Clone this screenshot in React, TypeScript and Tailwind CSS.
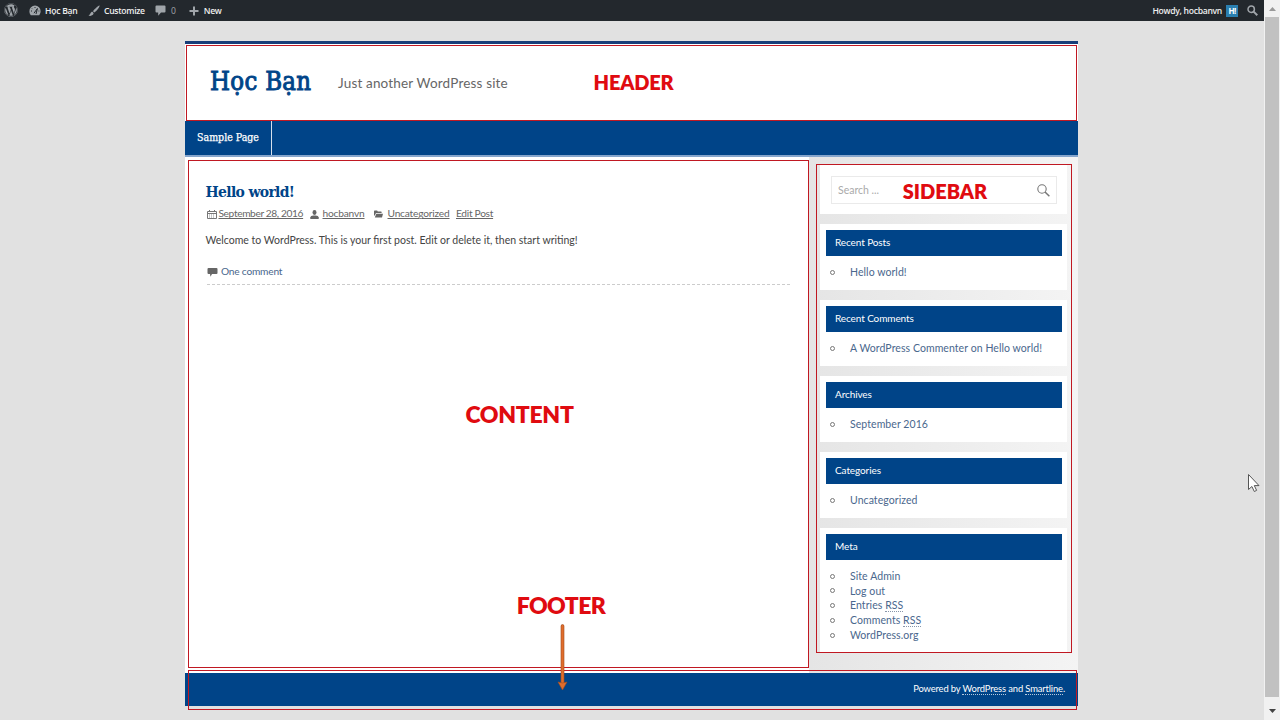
import React from "react";
import { FaWordpress } from "react-icons/fa";

const Widget = ({ title, items }: { title: string; items: React.ReactNode[] }) => (
  <section className="mb-[9.9px] bg-white pt-1.5 pr-[5px] pb-[10px] pl-1.5">
    <h3 className="flex h-[26px] items-center bg-[#004488] pb-[2px] pl-[9px] text-[10px] leading-none tracking-[-0.1px] text-white">
      {title}
    </h3>
    <ul className="pt-[9.3px] text-[10.5px] leading-[14.7px] tracking-[0.07px] text-[#4a678d]">
      {items.map((item, i) => (
        <li key={i} className="flex items-center pl-1">
          <span className="mr-[15px] block size-[5px] rounded-full border border-[#777]" />
          <span className="whitespace-nowrap">{item}</span>
        </li>
      ))}
    </ul>
  </section>
);

const Rss = () => <span className="border-b border-dotted border-[#8896aa] leading-none">RSS</span>;

const AdminBar = () => (
  <div className="flex h-[21px] items-center bg-[#23282d] font-['Open_Sans'] text-[8.6px] font-semibold leading-none tracking-[-0.25px] text-[#eee]">
    <FaWordpress className="mb-px ml-1 size-[14px] text-[#a0a5aa]" />
    <svg className="ml-[11px] h-[11px] w-[12px]" viewBox="0 0 12 11">
      <path d="M6 .5A5.6 5.6 0 0 0 .4 6.2c0 1.5.5 2.8 1.4 4.1h8.4c.9-1.3 1.4-2.6 1.4-4.1A5.6 5.6 0 0 0 6 .5Z" fill="#a0a5aa" />
      <path d="M5 8.2 8.4 3.5 7 9" stroke="#23282d" fill="none" />
      <path d="M2 6h1M3 3.5l.6.6M6 2v1M9.5 6h.8" stroke="#23282d" />
    </svg>
    <span className="mt-px ml-1 w-[33px] whitespace-nowrap">Học Bạn</span>
    <svg className="ml-[10px] size-[12px]" viewBox="0 0 12 12" fill="#a0a5aa">
      <path d="M11.6.4c-1-.3-4.7 3.2-6.6 5.8l1.4 1.4C9 5.3 12.1 1.4 11.6.4ZM4.4 6.8C2.6 6.7 2.7 9.2.5 10.6c2.5.9 5-.3 5.1-2.5Z" />
    </svg>
    <span className="mt-px ml-1 w-[41px] tracking-[-0.3px] whitespace-nowrap">Customize</span>
    <svg className="ml-[10px] size-[11px]" viewBox="0 0 11 11" fill="#a0a5aa">
      <path d="M1.5.5h8q1 0 1 1v5q0 1-1 1H6L3.2 10.8V7.5H1.5q-1 0-1-1v-5q0-1 1-1Z" />
    </svg>
    <span className="mt-px ml-[5px] font-normal text-[#a0a5aa]">0</span>
    <svg className="ml-[13px] size-[10px]" viewBox="0 0 10 10">
      <path d="M5 .5v9M.5 5h9" stroke="#a0a5aa" strokeWidth="2" />
    </svg>
    <span className="mt-px ml-[5px]">New</span>
    <span className="mt-px ml-auto tracking-[-0.3px]">Howdy, hocbanvn</span>
    <span className="ml-1 flex size-[12px] items-center justify-center bg-[#2a7fb0] text-[8px] font-bold tracking-[-0.8px] text-white">
      H!
    </span>
    <svg className="mr-[6px] ml-[9px] size-[11px]" viewBox="0 0 11 11" fill="none" stroke="#a0a5aa">
      <circle cx="4.2" cy="4.2" r="3.2" strokeWidth="1.5" />
      <path d="m6.6 6.6 3.7 3.6" strokeWidth="2" />
    </svg>
  </div>
);

const Entry = () => (
  <main className="w-[624px] bg-white pt-[24px] pl-[20.5px]">
    <h2 className="font-['DejaVu_Serif_Condensed','DejaVu_Serif'] text-[15.5px] leading-[21px] font-bold tracking-[-0.65px] whitespace-nowrap text-[#004488] [font-stretch:condensed]">
      Hello world!
    </h2>
    <div className="mt-[5px] flex h-[14px] items-center text-[10.2px] whitespace-nowrap text-[#666]">
      <svg className="ml-[1px] h-[9px] w-[10px]" viewBox="0 0 10 9" fill="none" stroke="#777">
        <path d="M.5 1.5h9v7h-9ZM.5 3.5h9M2.5 0v2M7.5 0v2" />
        <path d="M2 5h6M2 7h6" strokeDasharray="1 1" strokeWidth=".8" />
      </svg>
      <span className="ml-[2px] w-[84px] tracking-[-0.38px] underline">September 28, 2016</span>
      <svg className="ml-[7px] h-[9px] w-[9px]" viewBox="0 0 9 9" fill="#666">
        <ellipse cx="4.5" cy="2.5" rx="2" ry="2.4" />
        <path d="M.3 9V7.3q.3-1.7 3-1.9h2.4q2.7.2 3 1.9V9Z" />
      </svg>
      <span className="ml-[4px] w-[42px] tracking-[-0.2px] underline">hocbanvn</span>
      <svg className="ml-[9px] h-[8px] w-[9px]" viewBox="0 0 9 8" fill="#666">
        <path d="M0 1 .5.5h2.6l.7 1h3.4l.4.5v1H2L.8 5.5H0Z" />
        <path d="M2.3 3.7H9L8 7.5H.8Z" />
      </svg>
      <span className="ml-[5px] w-[62px] tracking-[-0.2px] underline">Uncategorized</span>
      <span className="ml-[6.5px] tracking-[-0.3px] underline">Edit Post</span>
    </div>
    <p className="mt-[11px] text-[10.5px] leading-[16px] tracking-[0px] whitespace-nowrap text-[#444]">
      Welcome to WordPress. This is your first post. Edit or delete it, then start writing!
    </p>
    <div className="mr-[19px] ml-px flex h-[37px] items-end border-b border-dashed border-[#ccc] pb-[6px] text-[10.2px] leading-[14px] tracking-[-0.22px] text-[#4a678d]">
      <svg className="mr-[3.5px] mb-px h-[10px] w-[11px]" viewBox="0 0 11 10" fill="#666">
        <path d="M1.5 1h8q1 0 1 1v4q0 1-1 1H5L3.5 9.7 3 7H1.5q-1 0-1-1V2q0-1 1-1Z" />
      </svg>
      One comment
    </div>
  </main>
);

const Sidebar = () => (
  <aside className="flex-1 bg-gradient-to-r from-[#e5e5e5] to-[#f4f4f4] pt-[8px] pr-[11px] pl-[11px]">
    <div className="mb-[10px] h-[49px] bg-white pt-[11px] pr-[10px] pl-[11px]">
      <div className="flex h-[28px] items-center border border-[#eaeaea] px-1.5 text-[10.5px] text-[#aaa]">
        <span className="pt-[2px]">Search ...</span>
        <svg className="ml-auto size-[13px]" viewBox="0 0 13 13" fill="none" stroke="#777">
          <circle cx="5" cy="5" r="4.2" strokeWidth="1.1" />
          <path d="m8 8 4.4 4.2" strokeWidth="1.5" />
        </svg>
      </div>
    </div>
    <Widget title="Recent Posts" items={["Hello world!"]} />
    <Widget title="Recent Comments" items={["A WordPress Commenter on Hello world!"]} />
    <Widget title="Archives" items={["September 2016"]} />
    <Widget title="Categories" items={["Uncategorized"]} />
    <Widget title="Meta" items={["Site Admin", "Log out", <>Entries <Rss /></>, <>Comments <Rss /></>, "WordPress.org"]} />
  </aside>
);

const Frame = ({ place }: { place: string }) => <div className={`absolute border border-[#c01822] ${place}`} />;

const Label = ({ place, children }: { place: string; children: string }) => (
  <div className={`absolute flex items-center justify-center leading-none font-extrabold whitespace-nowrap text-[#e00b10] ${place}`}>
    {children}
  </div>
);

export default function App() {
  return (
    <div className="relative flex h-[720px] w-[1280px] overflow-hidden bg-[#e1e1e1] font-['Lato',sans-serif]">
      <div className="flex w-[1264px] flex-col">
        <AdminBar />
        <div className="mt-[20px] ml-[185px] flex h-[665px] w-[893px] flex-col">
          <header className="flex h-[80px] shrink-0 border-t-[3px] border-[#173d78] bg-white">
            <h1 className="mt-[20px] ml-[25px] w-[102px] font-['DejaVu_Serif_Condensed','DejaVu_Serif'] text-[25.5px] leading-[34px] tracking-[0.3px] whitespace-nowrap text-[#004488] [-webkit-text-stroke:0.9px_#004488] [font-stretch:condensed]">
              Học Bạn
            </h1>
            <p className="mt-[30px] ml-[26px] text-[13.5px] leading-[18px] tracking-[0.17px] whitespace-nowrap text-[#666]">
              Just another WordPress site
            </p>
          </header>
          <nav className="flex h-[36px] shrink-0 border-b-2 border-[#85a5cc] bg-[#004488]">
            <a className="flex w-[87px] items-center justify-center border-r border-[#d5e0ec] font-['DejaVu_Serif_Condensed','DejaVu_Serif'] text-[10.5px] tracking-[0px] whitespace-nowrap text-white [-webkit-text-stroke:0.25px_white] [font-stretch:condensed]">
              Sample Page
            </a>
          </nav>
          <div className="flex h-[516px] shrink-0">
            <Entry />
            <Sidebar />
          </div>
          <footer className="flex h-[33px] shrink-0 items-center justify-end bg-[#004488] pr-[13px] text-[9.4px] tracking-[-0.13px] text-white">
            <span className="whitespace-nowrap">
              Powered by <span className="border-b border-dotted border-[#b5c9de]">WordPress</span> and{" "}
              <span className="border-b border-dotted border-[#b5c9de]">Smartline</span>.
            </span>
          </footer>
        </div>
      </div>
      <div className="flex w-[16px] flex-col bg-[#f1f1f1]">
        <div className="flex h-[17px] items-center justify-center">
          <svg className="h-[4px] w-[7px]" viewBox="0 0 7 4" fill="#999"><path d="m0 4 3.5-4L7 4Z" /></svg>
        </div>
        <div className="mx-px h-[680px] bg-[#c1c1c1]" />
        <div className="flex flex-1 items-center justify-center pt-1">
          <svg className="h-[4px] w-[7px]" viewBox="0 0 7 4" fill="#444"><path d="m0 0 3.5 4L7 0Z" /></svg>
        </div>
      </div>

      <Frame place="left-[186px] top-[45px] w-[891px] h-[76px]" />
      <Frame place="left-[188px] top-[160px] w-[621px] h-[508px]" />
      <Frame place="left-[816px] top-[164px] w-[256px] h-[489px]" />
      <Frame place="left-[188px] top-[670px] w-[889px] h-[40px]" />
      <Label place="left-[594px] top-[71px] w-[79px] h-[22px] text-[20px] tracking-[-0.2px]">HEADER</Label>
      <Label place="left-[903px] top-[180px] w-[84px] h-[22px] text-[20px]">SIDEBAR</Label>
      <Label place="left-[466px] top-[401px] w-[107px] h-[26px] text-[23px] tracking-[-0.3px]">CONTENT</Label>
      <Label place="left-[517px] top-[592px] w-[88px] h-[26px] text-[23px] tracking-[-0.6px]">FOOTER</Label>
      <svg className="absolute top-[623px] left-[555px] h-[70px] w-[15px]" viewBox="0 0 15 70">
        <path d="M7.5 3v60" stroke="#a04c20" strokeWidth="3.6" strokeLinecap="round" />
        <path d="M7.5 3v60" stroke="#e06d2c" strokeWidth="2.4" strokeLinecap="round" />
        <path d="m3 59 4.5 8 4.5-8-4.5 1Z" fill="#e06d2c" stroke="#a04c20" strokeWidth=".6" />
      </svg>
      <svg className="absolute top-[473px] left-[1247px] h-[20px] w-[14px]" viewBox="0 0 14 20">
        <path d="M1.5 1.5v15l3.4-3 2.4 5 2.3-1.1-2.3-4.8H12Z" fill="#fff" stroke="#555" />
      </svg>
    </div>
  );
}
